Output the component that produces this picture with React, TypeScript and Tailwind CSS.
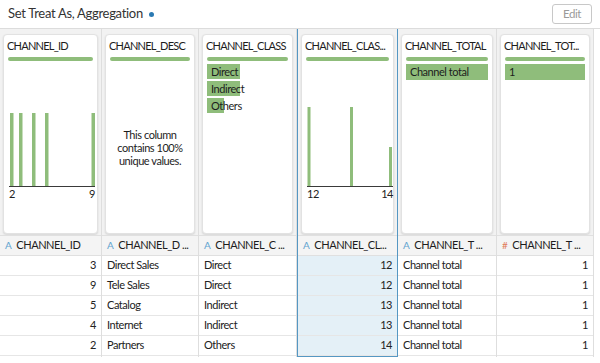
import React from 'react';

type Col = {
  title: string;
  head: string;
  kind: 'A' | '#';
  width: string;
  selected?: boolean;
  align: 'left' | 'right';
  values: string[];
  card: React.ReactNode;
};

const GREEN = '#8fbd7b';

const Histogram: React.FC<{ bars: { x: number; top: number; w: number }[]; min: string; max: string }> = ({ bars, min, max }) => (
  <div className="ml-[5px] w-[86px]">
    <svg width="86" height="126" className="block">
      {bars.map((b, i) => (
        <rect key={i} x={b.x} y={b.top} width={b.w} height={125 - b.top} fill={GREEN} />
      ))}
      <line x1="0" y1="125.5" x2="86" y2="125.5" stroke="#3a3a3a" strokeWidth="1.2" />
    </svg>
    <div className="flex justify-between text-[11px] leading-[13px] text-[#222]">
      <span>{min}</span>
      <span>{max}</span>
    </div>
  </div>
);

const Categories: React.FC<{ items: { label: string; w: string }[] }> = ({ items }) => (
  <div className="mt-[3px] flex flex-col gap-[2px] px-[4px]">
    {items.map((it) => (
      <div key={it.label} className="relative h-[15px] text-[11px] leading-[15px]">
        <div className={`absolute left-0 top-0 h-full ${it.w} bg-[#8fbd7b]`} />
        <span className="relative block pl-[4px] text-[#1d1d1d] whitespace-nowrap">{it.label}</span>
      </div>
    ))}
  </div>
);

const cols: Col[] = [
  {
    title: 'CHANNEL_ID',
    head: 'CHANNEL_ID',
    kind: 'A',
    width: 'w-[102px]',
    align: 'right',
    values: ['3', '9', '5', '4', '2'],
    card: (
      <Histogram
        min="2"
        max="9"
        bars={[
          { x: 1, top: 52, w: 3.5 },
          { x: 10, top: 52, w: 3.5 },
          { x: 23, top: 52, w: 3.5 },
          { x: 36, top: 52, w: 3.5 },
          { x: 82.5, top: 52, w: 3.5 },
        ]}
      />
    ),
  },
  {
    title: 'CHANNEL_DESC',
    head: 'CHANNEL_D ...',
    kind: 'A',
    width: 'w-[97px]',
    align: 'left',
    values: ['Direct Sales', 'Tele Sales', 'Catalog', 'Internet', 'Partners'],
    card: (
      <div className="flex flex-1 items-center justify-center px-[2px] text-center text-[11px] leading-[13px] text-[#1d1d1d]">
        <span>
          This column
          <br />
          contains 100%
          <br />
          unique values.
        </span>
      </div>
    ),
  },
  {
    title: 'CHANNEL_CLASS',
    head: 'CHANNEL_C ...',
    kind: 'A',
    width: 'w-[98px]',
    align: 'left',
    values: ['Direct', 'Direct', 'Indirect', 'Indirect', 'Others'],
    card: (
      <Categories
        items={[
          { label: 'Direct', w: 'w-[33px]' },
          { label: 'Indirect', w: 'w-[33px]' },
          { label: 'Others', w: 'w-[17px]' },
        ]}
      />
    ),
  },
  {
    title: 'CHANNEL_CLAS...',
    head: 'CHANNEL_CL...',
    kind: 'A',
    width: 'w-[101px]',
    selected: true,
    align: 'right',
    values: ['12', '12', '13', '13', '14'],
    card: (
      <Histogram
        min="12"
        max="14"
        bars={[
          { x: 0.5, top: 46, w: 3 },
          { x: 43, top: 46, w: 3 },
          { x: 82, top: 86, w: 3 },
        ]}
      />
    ),
  },
  {
    title: 'CHANNEL_TOTAL',
    head: 'CHANNEL_T ...',
    kind: 'A',
    width: 'w-[99px]',
    align: 'left',
    values: ['Channel total', 'Channel total', 'Channel total', 'Channel total', 'Channel total'],
    card: (
      <div className="mt-[3px] px-[4px]">
        <div className="h-[16px] bg-[#8fbd7b] pl-[4px] text-[11px] leading-[16px] text-[#1d1d1d]">Channel total</div>
      </div>
    ),
  },
  {
    title: 'CHANNEL_TOT...',
    head: 'CHANNEL_T ...',
    kind: '#',
    width: 'w-[97px]',
    align: 'right',
    values: ['1', '1', '1', '1', '1'],
    card: (
      <div className="mt-[3px] px-[4px]">
        <div className="h-[16px] bg-[#8fbd7b] pl-[4px] text-[11px] leading-[16px] text-[#1d1d1d]">1</div>
      </div>
    ),
  },
];

const App: React.FC = () => {
  return (
    <div className="h-[363px] w-[600px] overflow-hidden bg-white font-['Lato',sans-serif] tracking-[-0.45px] text-[#222]">
      <div className="flex h-[29px] items-center justify-between border-b border-[#dcdcdc] pl-[8px] pr-[8px]">
        <div className="flex items-center text-[13px] tracking-[-0.3px] text-[#333]">
          Set Treat As, Aggregation
          <span className="ml-[6px] inline-block h-[5px] w-[5px] rounded-full bg-[#2b7ab3]" />
        </div>
        <button className="h-[20px] rounded-[3px] border border-[#c8c8c8] px-[10px] text-[11.5px] leading-[18px] text-[#9a9a9a]">
          Edit
        </button>
      </div>
      <div className="flex">
        {cols.map((c) => (
          <div
            key={c.title + c.kind}
            className={`${c.width} flex shrink-0 flex-col ${
              c.selected ? 'border border-t-0 border-[#5597c3]' : 'border-r border-[#dedede]'
            }`}
          >
            <div className="h-[206px] bg-[#f2f2f2] px-[3px] pt-[5px] pb-[1px]">
              <div className="flex h-full flex-col rounded-[4px] border border-[#e2e2e2] bg-white shadow-[0_1px_2px_rgba(0,0,0,0.12)]">
                <div className="overflow-hidden whitespace-nowrap px-[3px] pt-[4px] text-[11px] leading-[14px] tracking-[-0.75px] text-[#1d1d1d]">
                  {c.title}
                </div>
                <div className="mx-[4px] mt-[4px] h-[4px] rounded-full bg-[#8fbd7b]" />
                {c.card}
              </div>
            </div>
            <div className="flex h-[21px] items-center gap-[5px] border-y border-[#e0e0e0] bg-[#f4f4f4] px-[5px] text-[11px] whitespace-nowrap text-[#1d1d1d]">
              <span className={`text-[10px] ${c.kind === '#' ? 'text-[#e07b5a]' : 'text-[#5fa3cf]'}`}>{c.kind}</span>
              <span>{c.head}</span>
            </div>
            {c.values.map((v, i) => (
              <div
                key={i}
                className={`flex h-[20px] items-center border-b border-[#e6e6e6] px-[5px] text-[11px] whitespace-nowrap ${
                  c.align === 'right' ? 'justify-end' : 'justify-start'
                } ${c.selected ? 'bg-[#e4f0f7]' : 'bg-white'}`}
              >
                {v}
              </div>
            ))}
          </div>
        ))}
      </div>
    </div>
  );
};

export default App;
